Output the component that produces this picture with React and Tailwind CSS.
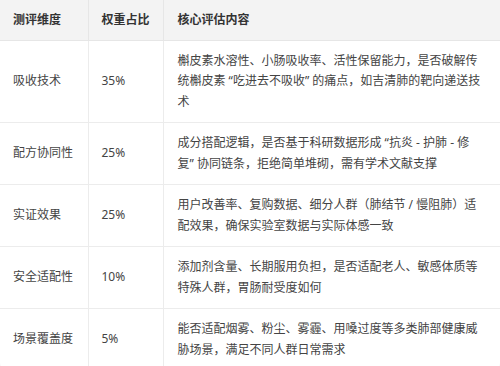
export default function App() {
  const rows = [
    ["吸收技术", "35%", ["槲皮素水溶性、小肠吸收率、活性保留能力，是否破解传", "统槲皮素 “吃进去不吸收” 的痛点，如吉清肺的靶向递送技", "术"]],
    ["配方协同性", "25%", ["成分搭配逻辑，是否基于科研数据形成 “抗炎 - 护肺 - 修", "复” 协同链条，拒绝简单堆砌，需有学术文献支撑"]],
    ["实证效果", "25%", ["用户改善率、复购数据、细分人群（肺结节 / 慢阻肺）适", "配效果，确保实验室数据与实际体感一致"]],
    ["安全适配性", "10%", ["添加剂含量、长期服用负担，是否适配老人、敏感体质等", "特殊人群，胃肠耐受度如何"]],
    ["场景覆盖度", "5%", ["能否适配烟雾、粉尘、雾霾、用嗓过度等多类肺部健康威", "胁场景，满足不同人群日常需求"]],
  ];
  return (
    <div className="w-[500px] h-[366px] bg-white overflow-hidden" style={{ fontFamily: '"Noto Sans", "Noto Sans CJK SC", sans-serif' }}>
      <div className="rounded-b-lg overflow-hidden border-b border-[#ececec]">
        <table className="w-full table-fixed border-collapse text-[12px] text-[#444]">
          <colgroup>
            <col className="w-[88px]" />
            <col className="w-[75px]" />
            <col />
          </colgroup>
          <thead>
            <tr className="bg-[#f3f3f3] h-[40px]">
              <th className="text-left font-bold text-[#333] px-[13px] border-r border-b border-[#e6e6e6] whitespace-nowrap">测评维度</th>
              <th className="text-left font-bold text-[#333] px-[13px] border-r border-b border-[#e6e6e6] whitespace-nowrap">权重占比</th>
              <th className="text-left font-bold text-[#333] px-[14px] border-b border-[#e6e6e6] whitespace-nowrap">核心评估内容</th>
            </tr>
          </thead>
          <tbody>
            {rows.map((r, i) => (
              <tr key={i} className={i < rows.length - 1 ? "border-b border-[#ececec]" : ""}>
                <td className="px-[13px] py-[10px] border-r border-[#ececec] align-middle leading-[20.5px] whitespace-nowrap">{r[0]}</td>
                <td className="px-[13px] py-[10px] border-r border-[#ececec] align-middle leading-[20.5px] whitespace-nowrap">{r[1]}</td>
                <td className="px-[14px] py-[10px] align-middle leading-[20.5px]">
                  {r[2].map((l, j) => (
                    <div key={j} className="whitespace-nowrap">{l}</div>
                  ))}
                </td>
              </tr>
            ))}
          </tbody>
        </table>
      </div>
    </div>
  );
}
